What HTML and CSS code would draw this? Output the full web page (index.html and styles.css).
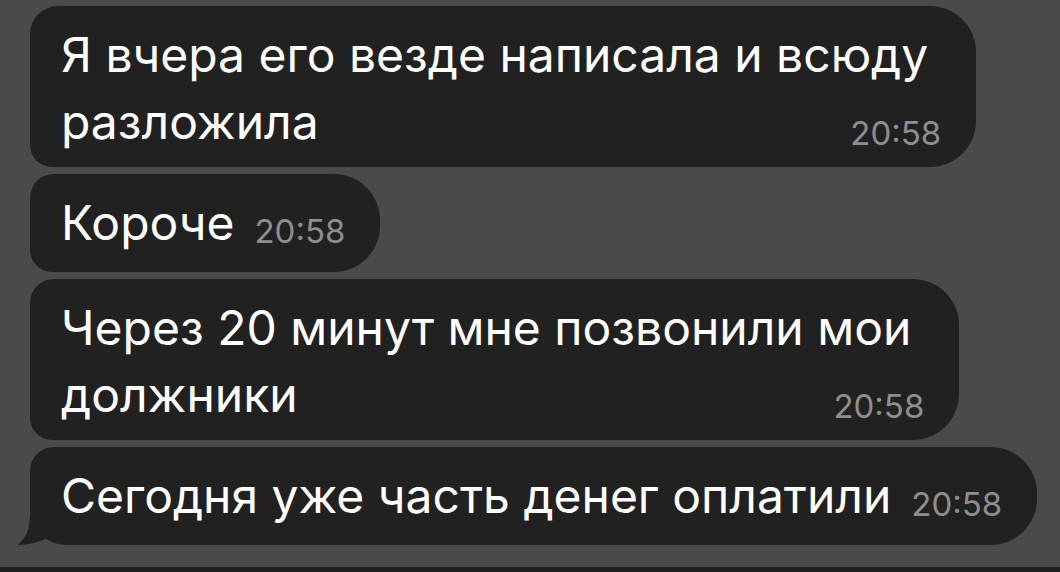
FILE: index.html
```html
<!DOCTYPE html>
<html lang="ru">
<head>
<meta charset="utf-8">
<title>Чат</title>
<link rel="stylesheet" href="styles.css">
</head>
<body>
<main class="chat">
  <div class="bubble first">Я вчера его везде написала и всюду<br>разложила<span class="time">20:58</span></div>
  <div class="bubble single">Короче<span class="time">20:58</span></div>
  <div class="bubble">Через 20 минут мне позвонили мои<br>должники<span class="time">20:58</span></div>
  <div class="bubble single last">Сегодня уже часть денег оплатили<span class="time">20:58</span><svg class="tail" width="40" height="30" viewBox="0 0 40 30"><path d="M14 0 C14 14 10 24 1 30 C12 30 24 27 34 22 L34 0 Z" fill="#212121"/></svg></div>
</main>
<footer class="inputbar"></footer>
</body>
</html>
```
FILE: styles.css
```css
html, body {
  margin: 0;
  height: 572px;
  overflow: hidden;
}
body {
  background: #4a4a4a;
  display: flex;
  flex-direction: column;
  font-family: Inter, "Liberation Sans", Arial, sans-serif;
}
.chat {
  flex: 1;
  display: flex;
  flex-direction: column;
  align-items: flex-start;
  gap: 7px;
  padding: 6px 0 0 30px;
}
.bubble {
  position: relative;
  background: #212121;
  color: #ffffff;
  font-size: 48px;
  line-height: 67px;
  padding: 15px 48px 12px 31px;
  border-radius: 24px 46px 46px 22px;
  white-space: nowrap;
}
.bubble.first {
  border-top-left-radius: 28px;
}
.bubble.single {
  padding-bottom: 16px;
}
.time {
  float: right;
  font-size: 33px;
  line-height: 32px;
  color: #8e8e8e;
  margin: 29px -13px 0 20px;
}
.single .time {
  margin-top: 26px;
}
.bubble.last {
  border-bottom-left-radius: 36px;
}
.tail {
  position: absolute;
  left: -14px;
  bottom: 0;
  display: block;
}
.inputbar {
  height: 5px;
  background: #1f1f1f;
}
```
